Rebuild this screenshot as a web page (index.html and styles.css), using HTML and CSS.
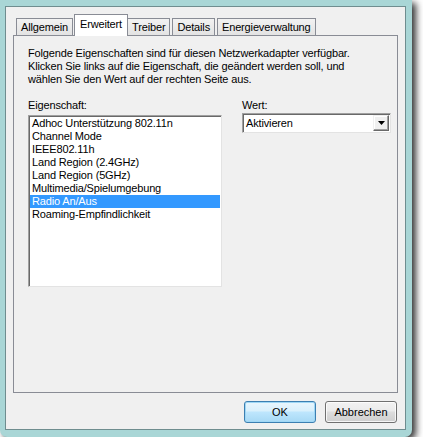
FILE: index.html
```html
<!DOCTYPE html>
<html lang="de">
<head>
    <meta charset="UTF-8">
    <title>Eigenschaften</title>
    <link rel="stylesheet" href="styles.css">
</head>
<body>
    <div class="window">
        <div class="dialog">

            <!-- Tab strip -->
            <div class="tabs">
                <div class="tab">Allgemein</div>
                <div class="tab active">Erweitert</div>
                <div class="tab">Treiber</div>
                <div class="tab">Details</div>
                <div class="tab">Energieverwaltung</div>
            </div>

            <!-- Advanced page -->
            <div class="panel">
                <p class="intro">Folgende Eigenschaften sind für diesen Netzwerkadapter verfügbar.<br>
                    Klicken Sie links auf die Eigenschaft, die geändert werden soll, und<br>
                    wählen Sie den Wert auf der rechten Seite aus.</p>

                <div class="columns">
                    <div class="col-left">
                        <label class="field-label">Eigenschaft:</label>
                        <ul class="listbox">
                            <li>Adhoc Unterstützung 802.11n</li>
                            <li>Channel Mode</li>
                            <li>IEEE802.11h</li>
                            <li>Land Region (2.4GHz)</li>
                            <li>Land Region (5GHz)</li>
                            <li>Multimedia/Spielumgebung</li>
                            <li class="selected">Radio An/Aus</li>
                            <li>Roaming-Empfindlichkeit</li>
                        </ul>
                    </div>
                    <div class="col-right">
                        <label class="field-label">Wert:</label>
                        <div class="combo">
                            <span class="combo-text">Aktivieren</span>
                            <span class="combo-btn">
                                <svg width="7" height="4" viewBox="0 0 7 4"><path d="M0 0h7L3.5 4z" fill="#000"/></svg>
                            </span>
                        </div>
                    </div>
                </div>
            </div>

            <!-- Dialog buttons -->
            <div class="buttons">
                <button class="btn default">OK</button>
                <button class="btn">Abbrechen</button>
            </div>
        </div>
    </div>
</body>
</html>
```
FILE: styles.css
```css
body {
    margin: 0;
    background: #fff;
    font-family: Tahoma, "Liberation Sans", Arial, sans-serif;
    font-size: 11px;
    letter-spacing: -0.15px;
    color: #000;
}

.window {
    width: 412px;
    height: 437px;
    box-sizing: border-box;
    padding: 6px 6px 7px 5px;
    background: #a9d6d6;
    border-radius: 0 0 7px 7px;
    box-shadow: 4px 3px 7px rgba(0, 0, 0, 0.8);
}

.dialog {
    height: 100%;
    box-sizing: border-box;
    border: 1px solid #6f8d8f;
    background: #f0f0f0;
    padding: 7px 7px 5px 7px;
    display: flex;
    flex-direction: column;
}

/* Tabs */
.tabs {
    display: flex;
    align-items: flex-end;
    height: 21px;
    padding-left: 3px;
    position: relative;
    z-index: 1;
}

    .tab {
        height: 17px;
        line-height: 16px;
        box-sizing: border-box;
        padding: 0 4px;
        margin-right: 2px;
        border: 1px solid #898c95;
        border-bottom: none;
        background: linear-gradient(#f2f2f2, #e3e3e3);
    }

    .tab.active {
        height: 22px;
        line-height: 19px;
        margin: 0 0 -1px -1px;
        padding: 0 5px;
        background: #fff;
    }

    .tab.active + .tab {
        margin-left: -1px;
    }

.panel {
    height: 358px;
    box-sizing: border-box;
    border: 1px solid #898c95;
    background: #f0f0f0;
    padding: 11px 5px 0 14px;
}

.intro {
    margin: 0;
    line-height: 13px;
    white-space: nowrap;
}

.columns {
    display: flex;
    margin-top: 13px;
}

.field-label {
    display: block;
    line-height: 13px;
    height: 16px;
}

.col-left {
    width: 194px;
    flex-shrink: 0;
}

.col-right {
    margin-left: 20px;
}

/* Property list */
.listbox {
    list-style: none;
    margin: 0;
    padding: 1px 0 0;
    height: 172px;
    box-sizing: border-box;
    background: #fff;
    border: 1px solid;
    border-color: #a0a0a0 #e3e3e3 #e3e3e3 #a0a0a0;
    box-shadow: inset 1px 1px 0 #696969;
}

    .listbox li {
        height: 13px;
        line-height: 13px;
        padding-left: 2px;
        margin-left: 1px;
        margin-right: 1px;
        white-space: nowrap;
    }

    .listbox li.selected {
        background: #3399ff;
        color: #fff;
    }

/* Value combo box */
.combo {
    width: 149px;
    height: 20px;
    margin-top: -2px;
    box-sizing: border-box;
    display: flex;
    align-items: center;
    background: #fff;
    border: 1px solid;
    border-color: #a0a0a0 #e3e3e3 #e3e3e3 #a0a0a0;
    box-shadow: inset 1px 1px 0 #696969;
}

.combo-text {
    flex: 1;
    padding-left: 3px;
}

.combo-btn {
    width: 16px;
    height: 16px;
    margin-right: 1px;
    box-sizing: border-box;
    display: flex;
    align-items: center;
    justify-content: center;
    background: #f0f0f0;
    border: 1px solid;
    border-color: #f0f0f0 #696969 #696969 #f0f0f0;
    box-shadow: inset -1px -1px 0 #a0a0a0, inset 1px 1px 0 #fff;
}

/* Bottom buttons */
.buttons {
    display: flex;
    justify-content: flex-end;
    gap: 9px;
    margin-top: 8px;
    padding-right: 1px;
}

.btn {
    width: 72px;
    height: 22px;
    font: inherit;
    color: #000;
    border: 1px solid #707070;
    border-radius: 3px;
    background: linear-gradient(#f2f2f2 0%, #ebebeb 45%, #dddddd 50%, #cfcfcf 100%);
    box-shadow: inset 0 0 0 1px rgba(255, 255, 255, 0.8);
    padding: 0;
}

    .btn.default {
        border-color: #3c7fb1;
        background: linear-gradient(#eaf6fd 0%, #d9f0fc 45%, #bee6fd 50%, #a7d9f5 100%);
        box-shadow: inset 0 0 0 1px #9fd7f5;
    }
```
